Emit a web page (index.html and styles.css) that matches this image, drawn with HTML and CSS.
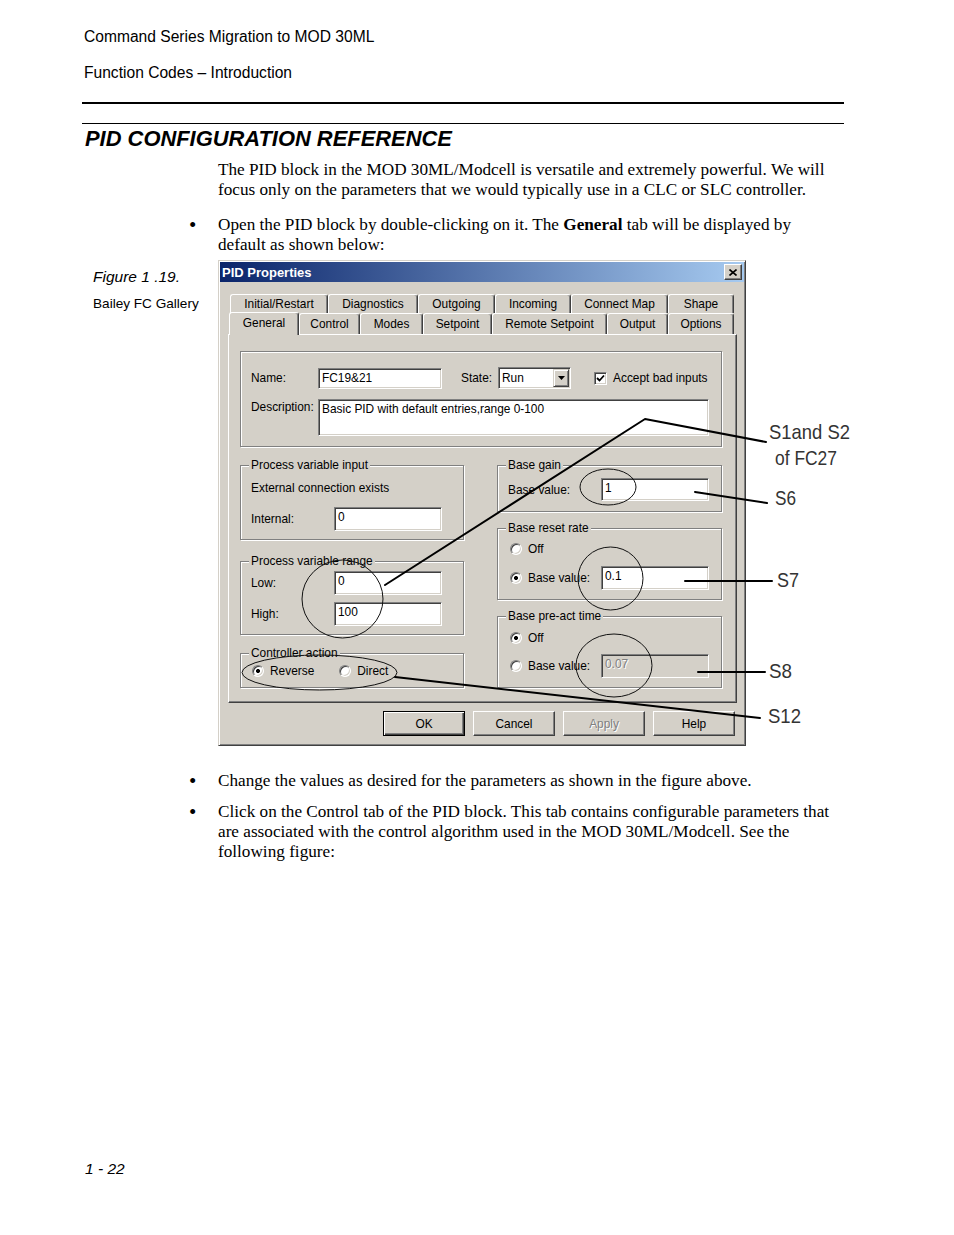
FILE: index.html
```html
<!DOCTYPE html>
<html>
<head>
<meta charset="utf-8">
<title>PID Configuration Reference</title>
<link rel="stylesheet" href="styles.css">
</head>
<body>
<div class="page">
  <div class="running">Command Series Migration to MOD 30ML</div>
  <div class="running second">Function Codes – Introduction</div>
  <div class="rule-thick"></div>
  <div class="rule-thin"></div>
  <h1 class="heading">PID CONFIGURATION REFERENCE</h1>
  <p class="body-text intro">The PID block in the MOD 30ML/Modcell is versatile and extremely powerful. We will<br>focus only on the parameters that we would typically use in a CLC or SLC controller.</p>
  <div class="bullet b1"><span class="dot">•</span><p>Open the PID block by double-clicking on it. The <b>General</b> tab will be displayed by<br>default as shown below:</p></div>

  <div class="figure-row">
    <div class="caption">
      <div class="fig-num">Figure 1 .19.</div>
      <div class="fig-name">Bailey FC Gallery</div>
    </div>
    <div class="figure">
      <div class="dialog">
        <div class="titlebar">
          <span class="title">PID Properties</span>
          <span class="close"><svg width="8" height="7" viewBox="0 0 8 7"><path d="M0.5 0.5 L7.5 6.5 M7.5 0.5 L0.5 6.5" stroke="#000" stroke-width="1.6" fill="none"/></svg></span>
        </div>
        <div class="dlg-body">
          <div class="tabrow back">
            <div class="tab t98">Initial/Restart</div>
            <div class="tab t90">Diagnostics</div>
            <div class="tab t77">Outgoing</div>
            <div class="tab t76">Incoming</div>
            <div class="tab t97">Connect Map</div>
            <div class="tab t66">Shape</div>
          </div>
          <div class="tabrow front">
            <div class="tab sel t70">General</div>
            <div class="tab t61">Control</div>
            <div class="tab t63">Modes</div>
            <div class="tab t69">Setpoint</div>
            <div class="tab t115">Remote Setpoint</div>
            <div class="tab t61">Output</div>
            <div class="tab t66">Options</div>
          </div>
          <div class="panel">
            <div class="group g-top">
              <div class="row r-name">
                <span class="lbl l-name">Name:</span>
                <div class="field f-name">FC19&amp;21</div>
                <span class="lbl l-state">State:</span>
                <div class="select">
                  <span class="sel-text">Run</span>
                  <span class="sel-btn"><svg width="7" height="4" viewBox="0 0 7 4"><path d="M0 0 H7 L3.5 4 Z" fill="#000"/></svg></span>
                </div>
                <span class="check"><svg width="9" height="9" viewBox="0 0 9 9"><path d="M1 4 L3.5 6.5 L8 1.5" stroke="#000" stroke-width="1.8" fill="none"/></svg></span>
                <span class="lbl l-accept">Accept bad inputs</span>
              </div>
              <div class="row r-desc">
                <span class="lbl l-desc">Description:</span>
                <div class="field f-desc">Basic PID with default entries,range 0-100</div>
              </div>
            </div>
            <div class="cols">
              <div class="col col-left">
                <div class="group g-pvin">
                  <div class="gtitle">Process variable input</div>
                  <div class="ext">External connection exists</div>
                  <div class="row r-int"><span class="lbl l-w83">Internal:</span><div class="field f-num">0</div></div>
                </div>
                <div class="group g-pvrange">
                  <div class="gtitle">Process variable range</div>
                  <div class="row r-low"><span class="lbl l-w83">Low:</span><div class="field f-num">0</div></div>
                  <div class="row r-high"><span class="lbl l-w83">High:</span><div class="field f-num">100</div></div>
                </div>
                <div class="group g-ctrl">
                  <div class="gtitle">Controller action</div>
                  <div class="row r-radio">
                    <span class="radio on"></span><span class="rtxt">Reverse</span>
                    <span class="radio r2"></span><span class="rtxt">Direct</span>
                  </div>
                </div>
              </div>
              <div class="col col-right">
                <div class="group g-gain">
                  <div class="gtitle">Base gain</div>
                  <div class="row r-gain"><span class="lbl l-w93">Base value:</span><div class="field f-num f-h23">1</div></div>
                </div>
                <div class="group g-reset">
                  <div class="gtitle">Base reset rate</div>
                  <div class="row r-off"><span class="radio"></span><span class="rtxt">Off</span></div>
                  <div class="row r-bv"><span class="radio on"></span><span class="lbl l-w73">Base value:</span><div class="field f-num">0.1</div></div>
                </div>
                <div class="group g-preact">
                  <div class="gtitle">Base pre-act time</div>
                  <div class="row r-off o2"><span class="radio on"></span><span class="rtxt">Off</span></div>
                  <div class="row r-bv b2v"><span class="radio"></span><span class="lbl l-w73">Base value:</span><div class="field f-num f-dis">0.07</div></div>
                </div>
              </div>
            </div>
          </div>
          <div class="buttons">
            <div class="btn default">OK</div>
            <div class="btn">Cancel</div>
            <div class="btn disabled">Apply</div>
            <div class="btn">Help</div>
          </div>
        </div>
      </div>
      <svg class="annot" viewBox="218 260 636 486" width="636" height="486">
        <g fill="none" stroke="#000" stroke-width="2" stroke-linecap="round" stroke-linejoin="round">
          <polyline points="385,585 645,419 766,442"/>
          <line x1="695" y1="492" x2="767" y2="503"/>
          <line x1="685" y1="581" x2="772" y2="581"/>
          <line x1="698" y1="672" x2="765" y2="672"/>
          <line x1="395" y1="677" x2="760" y2="718"/>
        </g>
        <g fill="none" stroke="#111" stroke-width="1">
          <ellipse cx="342.5" cy="599" rx="40.5" ry="39"/>
          <ellipse cx="608" cy="487" rx="28" ry="18"/>
          <ellipse cx="610.5" cy="578.5" rx="32.5" ry="31.5"/>
          <ellipse cx="614" cy="665.5" rx="38" ry="31.5"/>
          <ellipse cx="319.5" cy="672.5" rx="77.5" ry="17.5"/>
        </g>
        <g class="annot-text">
          <text x="769" y="439" textLength="81" lengthAdjust="spacingAndGlyphs">S1and S2</text>
          <text x="775" y="465" textLength="62" lengthAdjust="spacingAndGlyphs">of FC27</text>
          <text x="775" y="505" textLength="21" lengthAdjust="spacingAndGlyphs">S6</text>
          <text x="777" y="587" textLength="22" lengthAdjust="spacingAndGlyphs">S7</text>
          <text x="769" y="678" textLength="23" lengthAdjust="spacingAndGlyphs">S8</text>
          <text x="768" y="723" textLength="33" lengthAdjust="spacingAndGlyphs">S12</text>
        </g>
      </svg>
    </div>
  </div>

  <div class="bullet b2"><span class="dot">•</span><p>Change the values as desired for the parameters as shown in the figure above.</p></div>
  <div class="bullet b3"><span class="dot">•</span><p>Click on the Control tab of the PID block. This tab contains configurable parameters that<br>are associated with the control algorithm used in the MOD 30ML/Modcell. See the<br>following figure:</p></div>

  <div class="footer">1 - 22</div>
</div>
</body>
</html>
```

FILE: styles.css
```css
body {
  margin: 0;
  background: #fff;
  color: #000;
}

.page {
  width: 762px;
  margin-left: 82px;
  padding-top: 28px;
}

.running {
  font: 15.6px/18px "Liberation Sans", Arial, sans-serif;
  padding-left: 2px;
}
.running.second { margin-top: 18px; }

.rule-thick {
  margin-top: 20px;
  border-top: 2px solid #000;
}
.rule-thin {
  margin-top: 19px;
  border-top: 1px solid #000;
}

.heading {
  margin: 2px 0 0;
  padding-left: 3px;
  font: italic bold 21.9px/25px "Liberation Sans", Arial, sans-serif;
}

.body-text {
  font: 17.2px/20px "Liberation Serif", "Times New Roman", serif;
  margin: 0;
  white-space: nowrap;
}
.intro {
  margin-top: 9px;
  padding-left: 136px;
}

.bullet {
  display: flex;
  padding-left: 104px;
  font: 17.2px/20px "Liberation Serif", "Times New Roman", serif;
  white-space: nowrap;
}
.bullet .dot {
  width: 32px;
  padding-left: 3px;
  box-sizing: border-box;
  flex: none;
  font-size: 21px;
  line-height: 20px;
}
.bullet p { margin: 0; }
.b1 { margin-top: 15px; }
.b2 { margin-top: 25px; }
.b3 { margin-top: 11px; }

.figure-row {
  display: flex;
  margin-top: 5px;
}
.caption {
  width: 136px;
  padding-left: 11px;
  box-sizing: border-box;
  flex: none;
}
.fig-num {
  font: italic 15.5px/18px "Liberation Sans", Arial, sans-serif;
  margin-top: 8px;
}
.fig-name {
  font: 13.6px/18px "Liberation Sans", Arial, sans-serif;
  margin-top: 9px;
}

.figure {
  position: relative;
  width: 528px;
  height: 486px;
  flex: none;
}
.annot {
  position: absolute;
  left: 0;
  top: 0;
  overflow: visible;
  pointer-events: none;
}
.annot-text {
  font-family: "Liberation Sans", Arial, sans-serif;
  font-size: 21px;
  fill: #333;
}

.footer {
  margin-top: 298px;
  padding-left: 3px;
  font: italic 15.5px/18px "Liberation Sans", Arial, sans-serif;
}

/* ---------- dialog ---------- */
.dialog {
  width: 528px;
  height: 486px;
  box-sizing: border-box;
  background: #d4d0c8;
  border: 1px solid;
  border-color: #d4d0c8 #404040 #404040 #d4d0c8;
  box-shadow: inset 1px 1px #fff, inset -1px -1px #808080;
  padding: 1px;
  font: 11.9px "Liberation Sans", Arial, sans-serif;
  color: #000;
}

.titlebar {
  height: 20px;
  display: flex;
  align-items: center;
  justify-content: space-between;
  background: linear-gradient(to right, #0a246a, #a6caf0);
  padding: 0 2px;
}
.title {
  color: #fff;
  font: bold 13px "Liberation Sans", Arial, sans-serif;
}
.close {
  width: 18px;
  height: 16px;
  box-sizing: border-box;
  background: #d4d0c8;
  border: 1px solid;
  border-color: #fff #404040 #404040 #fff;
  box-shadow: inset -1px -1px #808080;
  display: flex;
  align-items: center;
  justify-content: center;
}

.dlg-body {
  padding: 12px 7px 0 8px;
}

.tabrow { display: flex; }
.tabrow.back {
  margin-left: 2px;
  height: 19px;
}
.tabrow.front {
  margin-left: 1px;
  height: 21px;
  align-items: flex-start;
}
.tab {
  box-sizing: border-box;
  height: 100%;
  flex: none;
  background: #d4d0c8;
  border-top: 1px solid #fff;
  border-left: 1px solid #fff;
  border-right: 1px solid #404040;
  box-shadow: inset -1px 0 #808080;
  border-radius: 3px 3px 0 0;
  display: flex;
  align-items: center;
  justify-content: center;
  white-space: nowrap;
}
.tab.sel {
  height: 23px;
  margin-top: -1px;
  position: relative;
  z-index: 1;
  padding-bottom: 3px;
}
.t61 { width: 61px; }
.t63 { width: 63px; }
.t66 { width: 66px; }
.t69 { width: 69px; }
.t70 { width: 70px; }
.t76 { width: 76px; }
.t77 { width: 77px; }
.t90 { width: 90px; }
.t97 { width: 97px; }
.t98 { width: 98px; }
.t115 { width: 115px; }

.panel {
  height: 369px;
  box-sizing: border-box;
  border: 1px solid;
  border-color: #fff #404040 #404040 #fff;
  box-shadow: inset -1px -1px #808080;
  padding: 16px 0 0 11px;
}

.group {
  box-sizing: border-box;
  border: 1px solid #808080;
  box-shadow: 1px 1px 0 #fff, inset 1px 1px 0 #fff;
  padding-left: 10px;
}
.gtitle {
  width: fit-content;
  margin: -8px 0 0 -2px;
  padding: 0 2px;
  background: #d4d0c8;
  line-height: 14px;
  white-space: nowrap;
}

.g-top {
  width: 482px;
  height: 96px;
  padding-top: 15px;
}

.row {
  display: flex;
  align-items: center;
}
.lbl {
  flex: none;
  white-space: nowrap;
}
.r-name { height: 22px; }
.l-name { width: 67px; }
.l-state { width: 37px; margin-left: 19px; }
.l-accept { margin-left: 6px; }
.r-desc {
  margin-top: 10px;
  align-items: flex-start;
}
.l-desc {
  width: 67px;
  padding-top: 1px;
  line-height: 14px;
}

.field {
  box-sizing: border-box;
  flex: none;
  background: #fff;
  border: 1px solid;
  border-color: #808080 #fff #fff #808080;
  box-shadow: inset 1px 1px #404040, inset -1px -1px #d4d0c8;
  padding: 2px 3px;
  line-height: 14px;
  white-space: nowrap;
  overflow: hidden;
}
.f-name { width: 124px; height: 21px; }
.f-desc { width: 391px; height: 37px; }
.f-num { width: 108px; height: 24px; }
.f-h23 { height: 23px; }
.f-dis {
  background: #d4d0c8;
  color: #808080;
  text-shadow: 1px 1px #fff;
}

.select {
  box-sizing: border-box;
  flex: none;
  width: 73px;
  height: 22px;
  background: #fff;
  border: 1px solid;
  border-color: #808080 #fff #fff #808080;
  box-shadow: inset 1px 1px #404040, inset -1px -1px #d4d0c8;
  padding: 1px 1px 1px 3px;
  display: flex;
  align-items: center;
  justify-content: space-between;
}
.sel-btn {
  width: 16px;
  height: 18px;
  box-sizing: border-box;
  background: #d4d0c8;
  border: 1px solid;
  border-color: #d4d0c8 #404040 #404040 #d4d0c8;
  box-shadow: inset 1px 1px #fff, inset -1px -1px #808080;
  display: flex;
  align-items: center;
  justify-content: center;
}

.check {
  flex: none;
  margin-left: 23px;
  width: 13px;
  height: 13px;
  box-sizing: border-box;
  background: #fff;
  border: 1px solid;
  border-color: #808080 #fff #fff #808080;
  box-shadow: inset 1px 1px #404040, inset -1px -1px #d4d0c8;
  display: flex;
  align-items: center;
  justify-content: center;
}

.cols {
  display: flex;
  gap: 33px;
  margin-top: 18px;
}
.col {
  display: flex;
  flex-direction: column;
}
.col-left { width: 224px; }
.col-right { width: 225px; }

.g-pvin { height: 75px; }
.ext {
  margin-top: 9px;
  line-height: 14px;
}
.r-int { margin-top: 12px; height: 24px; }
.l-w83 { width: 83px; }

.g-pvrange { height: 74px; margin-top: 21px; }
.r-low { margin-top: 3px; height: 24px; }
.r-high { margin-top: 7px; height: 24px; }

.g-ctrl { height: 35px; margin-top: 18px; }
.r-radio { margin-top: 3px; height: 16px; margin-left: 1px; }

.radio {
  flex: none;
  width: 12px;
  height: 12px;
  box-sizing: border-box;
  border-radius: 50%;
  border: 1px solid;
  border-color: #808080 #fff #fff #808080;
  box-shadow: inset 1px 1px #404040, inset -1px -1px #d4d0c8;
  background: #fff;
}
.radio.on {
  background: radial-gradient(circle, #000 0 1.7px, #fff 2.3px);
}
.radio.r2 { margin-left: 25px; }
.rtxt {
  margin-left: 6px;
  white-space: nowrap;
}

.g-gain { height: 47px; }
.r-gain { margin-top: 6px; height: 23px; }
.l-w93 { width: 93px; }

.g-reset { height: 72px; margin-top: 16px; }
.g-preact { height: 72px; margin-top: 16px; }
.r-off { margin-top: 7px; height: 14px; margin-left: 2px; }
.r-bv { margin-top: 10px; height: 24px; margin-left: 2px; }
.r-off.o2 { margin-top: 8px; }
.r-bv.b2v { margin-top: 9px; }
.l-w73 { width: 73px; margin-left: 6px; }

.buttons {
  display: flex;
  justify-content: flex-end;
  gap: 8px;
  margin-top: 8px;
  padding-right: 2px;
}
.btn {
  width: 82px;
  height: 25px;
  box-sizing: border-box;
  border: 1px solid;
  border-color: #fff #404040 #404040 #fff;
  box-shadow: inset -1px -1px #808080;
  display: flex;
  align-items: center;
  justify-content: center;
}
.btn.default {
  border-color: #000;
  box-shadow: inset 1px 1px #fff, inset -1px -1px #404040, inset -2px -2px #808080;
}
.btn.disabled {
  color: #808080;
  text-shadow: 1px 1px #fff;
}
```
